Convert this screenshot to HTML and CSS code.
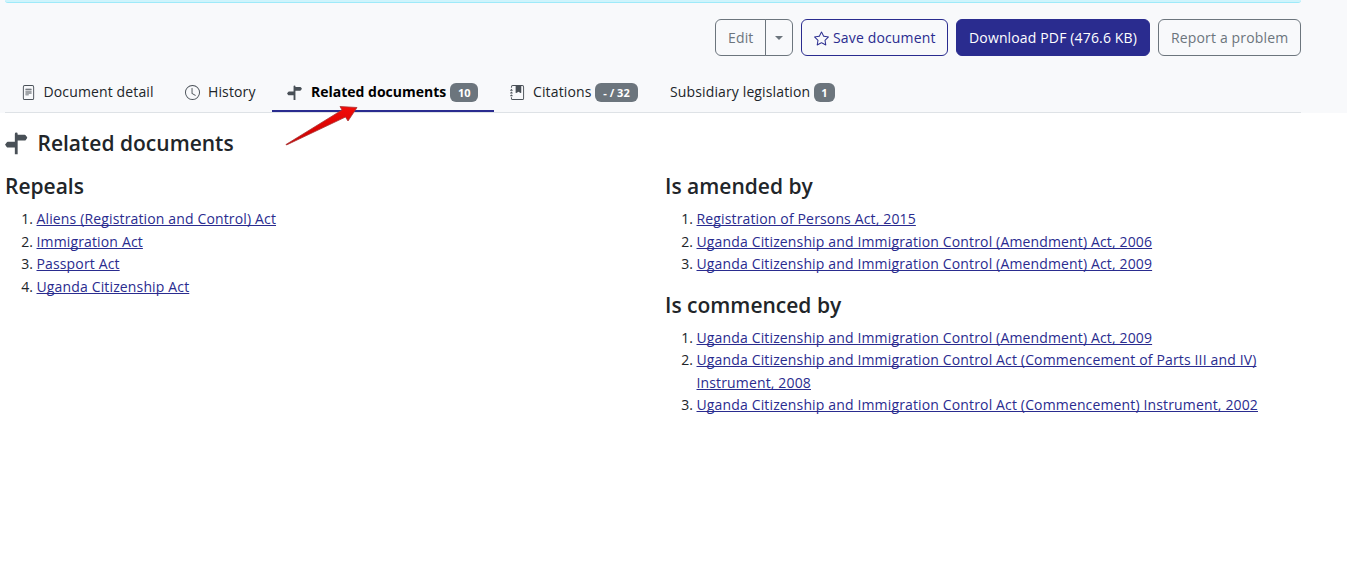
FILE: index.html
```html
<!DOCTYPE html>
<html lang="en">
<head>
<meta charset="utf-8">
<title>Related documents</title>
<link rel="stylesheet" href="styles.css">
</head>
<body>
<svg width="0" height="0" class="sprite">
  <symbol id="signpost" viewBox="0 0 16 16"><path d="M7 16h2V6h5a1 1 0 0 0 .8-.4l.975-1.3a.5.5 0 0 0 0-.6L14.8 2.4A1 1 0 0 0 14 2H9v-.586a1 1 0 0 0-2 0V7H2a1 1 0 0 0-.8.4L.225 8.7a.5.5 0 0 0 0 .6l.975 1.3a1 1 0 0 0 .8.4h5v5z"/></symbol>
</svg>
<header class="page-header">
  <div class="alert-edge"></div>
  <div class="actions">
    <div class="btn-group">
      <button class="btn btn-edit">Edit</button>
      <button class="btn btn-caret"><span class="caret"></span></button>
    </div>
    <button class="btn btn-save"><svg class="icon" viewBox="0 0 16 16"><path d="M2.866 14.85c-.078.444.36.791.746.593l4.39-2.256 4.389 2.256c.386.198.824-.149.746-.592l-.83-4.73 3.522-3.356c.33-.314.16-.888-.282-.95l-4.898-.696L8.465.792a.513.513 0 0 0-.927 0L5.354 5.12l-4.898.696c-.441.062-.612.636-.283.95l3.523 3.356-.83 4.73zm4.905-2.767-3.686 1.894.694-3.957a.56.56 0 0 0-.163-.505L1.71 6.745l4.052-.576a.53.53 0 0 0 .393-.288L8 2.223l1.847 3.658a.53.53 0 0 0 .393.288l4.052.575-2.906 2.77a.56.56 0 0 0-.163.506l.694 3.957-3.686-1.894a.5.5 0 0 0-.461 0z"/></svg>Save document</button>
    <button class="btn btn-download">Download PDF (476.6 KB)</button>
    <button class="btn btn-report">Report a problem</button>
  </div>
  <nav class="tabs">
    <a class="tab tab-detail"><svg class="icon" viewBox="0 0 16 16"><path d="M5 4a.5.5 0 0 0 0 1h6a.5.5 0 0 0 0-1zm-.5 2.5A.5.5 0 0 1 5 6h6a.5.5 0 0 1 0 1H5a.5.5 0 0 1-.5-.5M5 8a.5.5 0 0 0 0 1h6a.5.5 0 0 0 0-1zm0 2a.5.5 0 0 0 0 1h3a.5.5 0 0 0 0-1z"/><path d="M2 2a2 2 0 0 1 2-2h8a2 2 0 0 1 2 2v12a2 2 0 0 1-2 2H4a2 2 0 0 1-2-2zm10-1H4a1 1 0 0 0-1 1v12a1 1 0 0 0 1 1h8a1 1 0 0 0 1-1V2a1 1 0 0 0-1-1"/></svg><span>Document detail</span></a>
    <a class="tab tab-history"><svg class="icon" viewBox="0 0 16 16"><path d="M8 3.5a.5.5 0 0 0-1 0V9a.5.5 0 0 0 .252.434l3.5 2a.5.5 0 0 0 .496-.868L8 8.71z"/><path d="M8 16A8 8 0 1 0 8 0a8 8 0 0 0 0 16m7-8A7 7 0 1 1 1 8a7 7 0 0 1 14 0"/></svg><span>History</span></a>
    <a class="tab tab-related active"><svg class="icon"><use href="#signpost"/></svg><span>Related documents</span><span class="badge">10</span></a>
    <a class="tab tab-citations"><svg class="icon" viewBox="0 0 16 16"><path fill-rule="evenodd" d="M6 1h6v7a.5.5 0 0 1-.757.429L9 7.083 6.757 8.43A.5.5 0 0 1 6 8z"/><path d="M3 0h10a2 2 0 0 1 2 2v12a2 2 0 0 1-2 2H3a2 2 0 0 1-2-2v-1h1v1a1 1 0 0 0 1 1h10a1 1 0 0 0 1-1V2a1 1 0 0 0-1-1H3a1 1 0 0 0-1 1v1H1V2a2 2 0 0 1 2-2"/><path d="M1 5v-.5a.5.5 0 0 1 1 0V5h.5a.5.5 0 0 1 0 1h-2a.5.5 0 0 1 0-1zm0 3v-.5a.5.5 0 0 1 1 0V8h.5a.5.5 0 0 1 0 1h-2a.5.5 0 0 1 0-1zm0 3v-.5a.5.5 0 0 1 1 0v.5h.5a.5.5 0 0 1 0 1h-2a.5.5 0 0 1 0-1z"/></svg><span>Citations</span><span class="badge badge-citations">- / 32</span></a>
    <a class="tab tab-subsidiary"><span>Subsidiary legislation</span><span class="badge">1</span></a>
  </nav>
</header>
<main class="content">
  <h2 class="title"><svg class="title-icon"><use href="#signpost"/></svg><span>Related documents</span></h2>
  <div class="columns">
    <section class="column">
      <h3>Repeals</h3>
      <ol>
        <li><a href="#">Aliens (Registration and Control) Act</a></li>
        <li><a href="#">Immigration Act</a></li>
        <li><a href="#">Passport Act</a></li>
        <li><a href="#">Uganda Citizenship Act</a></li>
      </ol>
    </section>
    <section class="column">
      <h3>Is amended by</h3>
      <ol>
        <li><a href="#">Registration of Persons Act, 2015</a></li>
        <li><a href="#">Uganda Citizenship and Immigration Control (Amendment) Act, 2006</a></li>
        <li><a href="#">Uganda Citizenship and Immigration Control (Amendment) Act, 2009</a></li>
      </ol>
      <h3>Is commenced by</h3>
      <ol>
        <li><a href="#">Uganda Citizenship and Immigration Control (Amendment) Act, 2009</a></li>
        <li><a href="#">Uganda Citizenship and Immigration Control Act (Commencement of Parts III and IV)<br>Instrument, 2008</a></li>
        <li><a href="#">Uganda Citizenship and Immigration Control Act (Commencement) Instrument, 2002</a></li>
      </ol>
    </section>
  </div>
</main>
<svg class="pointer" viewBox="0 0 84 50">
  <defs><linearGradient id="red" x1="0" y1="0" x2="0" y2="1"><stop offset="0" stop-color="#f20b08"/><stop offset="1" stop-color="#c90000"/></linearGradient></defs>
  <path d="M5 45.500 L61 11 L59 7.500 L76 8.500 L67 22 L64.500 18 L5.500 46Z" fill="url(#red)" stroke="#a33" stroke-width=".8" stroke-linejoin="round"/>
</svg>
</body>
</html>
```
FILE: styles.css
```css
* { box-sizing: border-box; }
body {
  margin: 0;
  min-height: 573px;
  background: #fff;
  color: #212529;
  font: 14px/22.5px "Open Sans", "Noto Sans", sans-serif;
  overflow: hidden;
}
.sprite { display: block; }
.page-header {
  height: 113px;
  padding: 0 46px 0 5px;
  background: #f8f9fb;
}
.alert-edge {
  height: 3px;
  background: #cff4fc;
  border-bottom: 1px solid #9eeaf9;
  border-radius: 0 0 6px 6px;
}
.actions {
  display: flex;
  justify-content: flex-end;
  gap: 8px;
  padding-top: 16px;
}
.btn {
  display: flex;
  align-items: center;
  height: 37px;
  padding: 1px 12px 0;
  border: 1px solid #6c757d;
  border-radius: 6px;
  background: transparent;
  color: #6c757d;
  font: inherit;
  letter-spacing: .15px;
  white-space: nowrap;
}
.btn-group { display: flex; }
.btn-edit { width: 51px; border-radius: 6px 0 0 6px; }
.btn-caret {
  width: 28px;
  margin-left: -1px;
  padding: 0;
  justify-content: center;
  border-radius: 0 6px 6px 0;
}
.caret {
  border: 4px solid transparent;
  border-top-color: #6c757d;
  border-bottom: 0;
}
.btn-save { width: 147px; border-color: #2a2c8f; color: #2a2c8f; }
.btn-save .icon { fill: #2a2c8f; margin-right: 4px; }
.btn-download { width: 194px; border-color: #2a2c8f; background: #2a2c8f; color: #fff; }
.btn-report { width: 143px; }
.icon {
  flex: none;
  width: 15px;
  height: 15px;
  fill: #495057;
}
.tabs {
  display: flex;
  height: 42px;
  margin-top: 15px;
  border-bottom: 1px solid #dee2e6;
}
.tab {
  display: flex;
  align-items: center;
  padding: 1px 0 0 16px;
  letter-spacing: .13px;
  white-space: nowrap;
}
.tab .icon { margin-right: 8px; }
.tab-detail { width: 164px; padding-left: 15.5px; }
.tab-history { width: 103px; }
.tab-related { width: 222px; padding-left: 15px; }
.tab-related .icon { margin-right: 9px; }
.tab-citations { width: 160px; }
.tab-subsidiary { width: 197px; }
.active {
  padding-top: 3px;
  border-bottom: 2px solid #2a2c8f;
  color: #000;
  font-weight: 700;
  letter-spacing: 0;
}
.badge {
  height: 19px;
  min-width: 21px;
  margin-left: auto;
  margin-right: 16px;
  padding: 0 7.5px;
  border-radius: 6px;
  background: #6c757d;
  color: #fff;
  font-size: 11px;
  font-weight: 700;
  letter-spacing: 0;
  line-height: 20px;
  text-align: center;
}
.badge-citations { width: 43px; }
.content { padding: 17px 27px 0 5px; }
.title, h3 {
  margin: 0;
  font-size: 21px;
  font-weight: 600;
  letter-spacing: 0;
  line-height: 27px;
}
.title { display: flex; align-items: center; }
.title-icon {
  width: 22.5px;
  height: 22.5px;
  margin-right: 10px;
  fill: #495057;
}
.columns {
  display: grid;
  grid-template-columns: 636px 1fr;
  column-gap: 24px;
  padding-top: 16px;
}
h3 { margin-bottom: 8px; }
ol { margin: 0 0 16px; padding-left: 31.5px; }
a[href] {
  color: #2a2c8f;
  letter-spacing: .145px;
  text-underline-offset: 1px;
  text-decoration-thickness: 1px;
  text-decoration-skip-ink: none;
}
.pointer {
  position: absolute;
  left: 281px;
  top: 99px;
  width: 84px;
  height: 50px;
}
```
